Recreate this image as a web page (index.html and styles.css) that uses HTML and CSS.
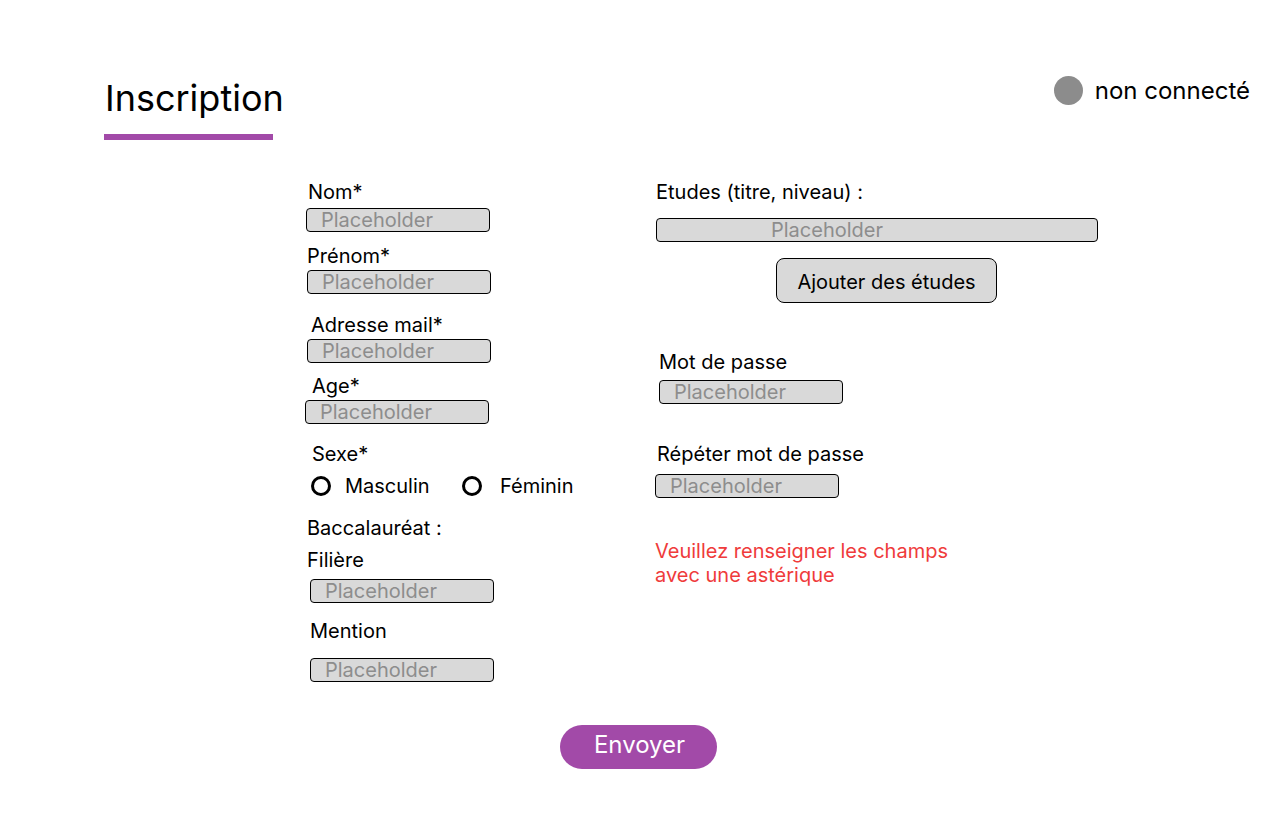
FILE: index.html
```html
<!DOCTYPE html>
<html lang="fr">
<head>
<meta charset="utf-8">
<title>Inscription</title>
<link rel="stylesheet" href="styles.css">
</head>
<body>
<header class="topbar">
  <div class="title-block">
    <h1 class="title">Inscription</h1>
    <div class="title-bar"></div>
  </div>
  <div class="status">
    <span class="status-dot"></span>
    <span class="status-text">non connecté</span>
  </div>
</header>

<form class="form">
  <div class="col col-left">
    <label class="label l-nom">Nom*</label>
    <input class="field f-nom" type="text" placeholder="Placeholder">

    <label class="label l-prenom">Prénom*</label>
    <input class="field f-prenom" type="text" placeholder="Placeholder">

    <label class="label l-mail">Adresse mail*</label>
    <input class="field f-mail" type="text" placeholder="Placeholder">

    <label class="label l-age">Age*</label>
    <input class="field f-age" type="text" placeholder="Placeholder">

    <div class="label l-sexe">Sexe*</div>
    <div class="radios">
      <label class="radio radio-m"><span class="radio-circle"></span><span>Masculin</span></label>
      <label class="radio radio-f"><span class="radio-circle"></span><span>Féminin</span></label>
    </div>

    <div class="label l-bac">Baccalauréat :</div>
    <label class="label l-filiere">Filière</label>
    <input class="field f-filiere" type="text" placeholder="Placeholder">

    <label class="label l-mention">Mention</label>
    <input class="field f-mention" type="text" placeholder="Placeholder">
  </div>

  <div class="col col-right">
    <label class="label l-etudes">Etudes (titre, niveau) :</label>
    <input class="field field-wide f-etudes" type="text" placeholder="Placeholder">
    <button class="add-btn" type="button">Ajouter des études</button>

    <label class="label l-mdp">Mot de passe</label>
    <input class="field f-mdp" type="password" placeholder="Placeholder">

    <label class="label l-mdp2">Répéter mot de passe</label>
    <input class="field f-mdp2" type="password" placeholder="Placeholder">

    <p class="error">Veuillez renseigner les champs<br>avec une astérique</p>
  </div>
</form>

<div class="submit-row">
  <button class="submit" type="button">Envoyer</button>
</div>
</body>
</html>
```
FILE: styles.css
```css
* { box-sizing: border-box; }

html, body {
  margin: 0;
  padding: 0;
  background: #ffffff;
}

body {
  font-family: Inter, "Noto Sans", sans-serif;
  color: #000;
  width: 1280px;
  height: 832px;
  overflow: hidden;
}

/* Header */
.topbar {
  display: flex;
  justify-content: space-between;
  align-items: flex-start;
  padding: 76px 30px 0 104px;
}

.title {
  margin: 0 0 0 1px;
  font-size: 36px;
  font-weight: 400;
  line-height: 44px;
}

.title-bar {
  width: 169px;
  height: 6px;
  margin-top: 14px;
  background: #a24aa8;
}

.status {
  display: flex;
  align-items: center;
  gap: 12px;
}

.status-dot {
  width: 29px;
  height: 29px;
  border-radius: 50%;
  background: #8c8c8c;
}

.status-text {
  font-size: 24px;
  line-height: 29px;
}

/* Form */
.form {
  display: flex;
  margin-top: 40px;
  padding-left: 305px;
}

.col {
  display: flex;
  flex-direction: column;
  align-items: flex-start;
}

.col-left { width: 350px; }
.col-right { width: 460px; }

.label {
  display: block;
  font-size: 20px;
  line-height: 24px;
}

.field {
  display: block;
  width: 184px;
  height: 24px;
  padding: 0 0 0 14px;
  border: 1px solid #000;
  border-radius: 4px;
  background: #d9d9d9;
  font-family: Inter, "Noto Sans", sans-serif;
  font-size: 20px;
  color: #000;
  outline: none;
}

.field::placeholder { color: #8d8d8d; opacity: 1; }

.field-wide {
  width: 442px;
  padding-left: 114px;
}

/* left column spacing */
.l-nom { margin: 0 0 0 3px; }
.f-nom { margin: 4px 0 0 1px; }
.l-prenom { margin: 12px 0 0 2px; }
.f-prenom { margin: 2px 0 0 2px; }
.l-mail { margin: 19px 0 0 6px; }
.f-mail { margin: 2px 0 0 2px; }
.l-age { margin: 11px 0 0 7px; }
.f-age { margin: 2px 0 0 0; }
.l-sexe { margin: 18px 0 0 7px; }
.l-bac { margin: 18px 0 0 2px; }
.l-filiere { margin: 8px 0 0 2px; }
.f-filiere { margin: 7px 0 0 5px; }
.l-mention { margin: 16px 0 0 5px; }
.f-mention { margin: 15px 0 0 5px; }

.radios {
  display: flex;
  margin: 8px 0 0 6px;
  font-size: 20px;
  line-height: 24px;
}

.radio {
  display: flex;
  align-items: center;
}

.radio-m { width: 151px; gap: 14px; }
.radio-f { gap: 18px; }

.radio-circle {
  width: 20px;
  height: 20px;
  border: 3px solid #000;
  border-radius: 50%;
}

/* right column spacing */
.l-etudes { margin: 0 0 0 1px; }
.f-etudes { margin: 14px 0 0 1px; }

.add-btn {
  width: 221px;
  height: 45px;
  margin: 16px 0 0 121px;
  border: 1px solid #000;
  border-radius: 8px;
  background: #d9d9d9;
  font-family: Inter, "Noto Sans", sans-serif;
  font-size: 20px;
  color: #000;
  padding: 2px 0 0 0;
}

.l-mdp { margin: 47px 0 0 4px; }
.f-mdp { margin: 6px 0 0 4px; }
.l-mdp2 { margin: 38px 0 0 2px; }
.f-mdp2 { margin: 8px 0 0 0; }

.error {
  margin: 41px 0 0 0;
  font-size: 20px;
  line-height: 24px;
  color: #ef3b3b;
}

/* Submit */
.submit-row {
  display: flex;
  padding-left: 560px;
  margin-top: 43px;
}

.submit {
  width: 157px;
  height: 44px;
  border: none;
  border-radius: 22px;
  background: #a24aa8;
  color: #fff;
  font-family: Inter, "Noto Sans", sans-serif;
  font-size: 24px;
  padding: 0 0 5px 2px;
}
```
